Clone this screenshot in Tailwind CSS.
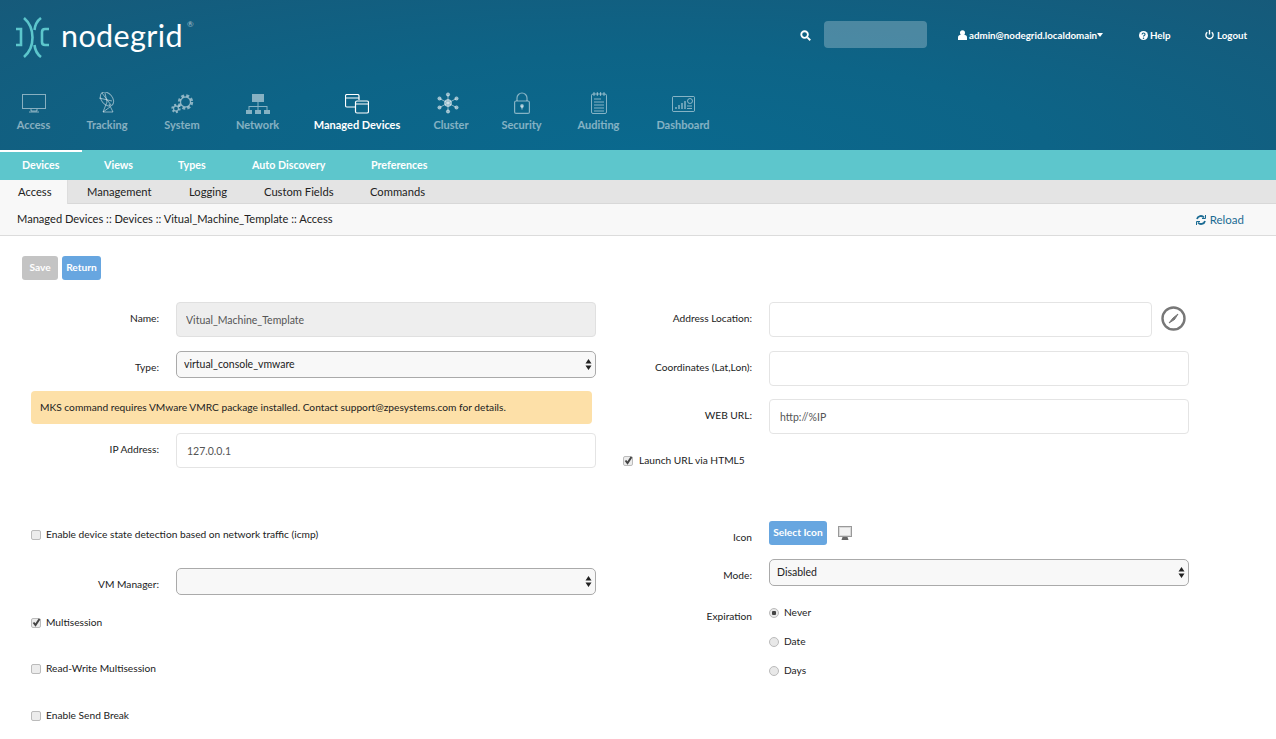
<!DOCTYPE html>
<html lang="en">
<head>
  <meta charset="UTF-8" />
  <title>Nodegrid</title>
  <script src="https://cdn.jsdelivr.net/npm/@tailwindcss/browser@4"></script>
</head>
<body class="bg-white text-[#222] font-['Lato',sans-serif] text-[10.2px] w-[1276px] h-[739px] overflow-hidden">

  <!-- header -->
  <header class="h-[150px] pt-[17px] bg-[radial-gradient(ellipse_at_50%_100%,#0a698e_0%,#0d6487_45%,#165a7a_100%)]">
    <div class="flex items-start h-[72px]">
      <div class="flex items-start pl-[15px] w-[780px]">
        <svg class="w-[35px] h-[41px]" viewBox="0 0 35 41" fill="none" stroke="#5cc6cc" stroke-width="2.6">
          <path d="M1 12h5v16H1" />
          <path d="M9 1c7 6 8.500 12 8.500 19.500S16 34 9 40" />
          <path d="M26 1c-4 3-6 7-6.500 12M19.500 28c.5 5 2.500 9 6.500 12" />
          <path d="M34 12h-4c-2 0-3 1-3 3v10c0 2 1 3 3 3h4" />
        </svg>
        <span class="text-white text-[30.5px] leading-[37px] ml-[11px] tracking-[.4px]">nodegrid</span>
        <span class="text-white/60 text-[8px] leading-[8px] ml-[4px] mt-[3px]">®</span>
      </div>
      <div class="flex items-center text-white font-bold text-[9.75px] h-[30px] mt-[3px]">
        <svg class="w-[11px] h-[11px] ml-[20px]" viewBox="0 0 12 12" fill="none" stroke="white" stroke-width="2"><circle cx="5" cy="5" r="3.600"/><path d="M8 8l3.200 3.200"/></svg>
        <div class="w-[103px] h-[27px] -mt-[2px] rounded-[4px] bg-white/25 ml-[13px]"></div>
        <svg class="w-[9px] h-[10px] ml-[31px]" viewBox="0 0 10 11" fill="white"><circle cx="5" cy="3" r="2.800"/><path d="M0 11V8c0-2 2-3 5-3s5 1 5 3v3z"/></svg>
        <span class="ml-[2px] w-[128px] whitespace-nowrap">admin@nodegrid.localdomain</span>
        <span class="w-0 h-0 border-x-[3.500px] border-x-transparent border-t-[4px] border-t-white"></span>
        <svg class="w-[9px] h-[9px] ml-[36px]" viewBox="0 0 10 10"><circle cx="5" cy="5" r="5" fill="white"/><path d="M3.400 3.800c0-2 3.400-2 3.300 0 0 1.300-1.700 1.200-1.700 2.400" fill="none" stroke="#0f6284" stroke-width="1.200"/><circle cx="5" cy="8" r=".8" fill="#0f6284"/></svg>
        <span class="ml-[2px] w-[28px]">Help</span>
        <svg class="w-[9px] h-[10px] ml-[27px]" viewBox="0 0 10 11" fill="none" stroke="white" stroke-width="1.500"><path d="M5 0v5M2.500 2.500a4 4 0 1 0 5 0"/></svg>
        <span class="ml-[3px]">Logout</span>
      </div>
    </div>

    <nav class="flex pl-[17px] pt-[5px] text-[11px] font-bold text-white/50">
      <a class="w-[33px] flex flex-col items-center">
        <svg class="w-[24px] h-[20px]" viewBox="0 0 24 20" fill="none" stroke="currentColor"><rect x=".5" y=".5" width="23" height="14"/><path d="M9 15v2h6v-2M7 18h10" /></svg>
        <span class="mt-[3px] leading-[16px] whitespace-nowrap">Access</span>
      </a>
      <a class="ml-[36px] w-[42px] flex flex-col items-center">
        <svg class="w-[20px] h-[22px] -mt-[2px]" viewBox="0 0 20 22" fill="none" stroke="currentColor"><ellipse cx="10" cy="7" rx="8" ry="5.500" transform="rotate(50 10 7)"/><path d="M5 1l9 12M2 6l13 3M8 1l2 9M10 10l-4 10h10l-4-8M6 20l7-5"/></svg>
        <span class="mt-[3px] leading-[16px] whitespace-nowrap">Tracking</span>
      </a>
      <a class="ml-[36px] w-[36px] flex flex-col items-center">
        <svg class="w-[23px] h-[20px]" viewBox="0 0 23 20" fill="none" stroke="currentColor" stroke-width="1.300"><circle cx="14.500" cy="8" r="5"/><circle cx="14.500" cy="8" r="6.500" stroke-width="2.400" stroke-dasharray="3 2.100"/><circle cx="5" cy="14.500" r="2.500"/><circle cx="5" cy="14.500" r="3.800" stroke-width="1.800" stroke-dasharray="2 1.900"/></svg>
        <span class="mt-[3px] leading-[16px] whitespace-nowrap">System</span>
      </a>
      <a class="ml-[36px] w-[43px] flex flex-col items-center">
        <svg class="w-[24px] h-[20px]" viewBox="0 0 24 20" fill="currentColor"><rect x="6" y="0" width="12" height="8"/><rect x="0" y="16" width="6" height="4"/><rect x="9" y="16" width="6" height="4"/><rect x="18" y="16" width="6" height="4"/><path d="M11.500 8h1v4h9v4h-1v-3h-8v3h-1v-3h-8v3h-1v-4h9z"/></svg>
        <span class="mt-[3px] leading-[16px] whitespace-nowrap">Network</span>
      </a>
      <a class="ml-[35px] w-[86px] flex flex-col items-center text-white">
        <svg class="w-[24px] h-[20px]" viewBox="0 0 24 20" fill="none" stroke="currentColor" stroke-width="1.200"><path d="M10 13H2c-1 0-1.500-.5-1.500-1.500V2C.5 1 1 .5 2 .5h10.500c1 0 1.500.5 1.500 1.500v4"/><rect x="10.500" y="7" width="13" height="12" rx="1.500"/><path d="M10.500 10h13M.5 4h13.500"/></svg>
        <span class="mt-[3px] leading-[16px] whitespace-nowrap">Managed Devices</span>
      </a>
      <a class="ml-[32px] w-[38px] flex flex-col items-center">
        <svg class="w-[22px] h-[22px] -mt-[2px] mr-[6px]" viewBox="0 0 22 21" fill="currentColor" stroke="currentColor"><circle cx="11" cy="10.500" r="3.500"/><circle cx="11" cy="2" r="1.600"/><circle cx="11" cy="19" r="1.600"/><circle cx="2.500" cy="6" r="1.600"/><circle cx="19.500" cy="6" r="1.600"/><circle cx="2.500" cy="15" r="1.600"/><circle cx="19.500" cy="15" r="1.600"/><path d="M11 2v17M2.500 6l17 9M19.500 6l-17 9"/></svg>
        <span class="mt-[3px] leading-[16px] whitespace-nowrap">Cluster</span>
      </a>
      <a class="ml-[31px] w-[41px] flex flex-col items-center">
        <svg class="w-[16px] h-[22px] -mt-[2px]" viewBox="0 0 16 22" fill="none" stroke="currentColor" stroke-width="1.200"><rect x=".6" y="9" width="14.800" height="12.400" rx="1.500"/><path d="M3 9V6a5 5 0 0 1 10 0v3"/><circle cx="8" cy="14" r="1.300" fill="currentColor"/><path d="M8 14v3.500"/></svg>
        <span class="mt-[3px] leading-[16px] whitespace-nowrap">Security</span>
      </a>
      <a class="ml-[35px] w-[43px] flex flex-col items-center">
        <svg class="w-[16px] h-[22px] -mt-[2px]" viewBox="0 0 16 22" fill="none" stroke="currentColor"><rect x=".5" y="2" width="15" height="19.500" rx="1.500"/><path d="M3 0v4M6.300 0v4M9.600 0v4M13 0v4M3 7h7M3 10h10M3 13h10M3 16h10M3 19h10"/></svg>
        <span class="mt-[3px] leading-[16px] whitespace-nowrap">Auditing</span>
      </a>
      <a class="ml-[36px] w-[54px] flex flex-col items-center">
        <svg class="w-[23px] h-[16px] mt-[2px] mb-[2px]" viewBox="0 0 23 16" fill="none" stroke="currentColor"><rect x=".5" y=".5" width="22" height="15" rx="1"/><path d="M4 13v-2M7 13V9M10 13V7M13 13V5" stroke-width="1.500"/><circle cx="18" cy="5" r="2.500"/><path d="M15 10h5M15 12.500h5"/></svg>
        <span class="mt-[3px] leading-[16px] whitespace-nowrap">Dashboard</span>
      </a>
    </nav>
  </header>

  <!-- teal tabs -->
  <div class="flex h-[30px] pt-[2px] gap-[45px] pl-[22px] bg-[#5dc6cc] text-white font-bold text-[10.7px] leading-[26px] relative">
    <span class="absolute left-0 top-0 w-[82px] h-[2px] bg-white"></span>
    <a class="w-[37px] whitespace-nowrap">Devices</a>
    <a class="w-[29px] whitespace-nowrap">Views</a>
    <a class="w-[29px] whitespace-nowrap">Types</a>
    <a class="w-[74px] whitespace-nowrap">Auto Discovery</a>
    <a class="w-[58px] whitespace-nowrap">Preferences</a>
  </div>

  <!-- sub tabs -->
  <div class="flex h-[24px] bg-[#e4e4e4] border-b border-[#d8d8d8] leading-[24px] text-[11.2px]">
    <a class="w-[68px] h-[24px] pl-[18px] bg-[#f8f8f8] border-r border-[#ddd]">Access</a>
    <div class="flex gap-[36px] pl-[19px]">
      <a class="w-[66px] whitespace-nowrap">Management</a>
      <a class="w-[39px] whitespace-nowrap">Logging</a>
      <a class="w-[70px] whitespace-nowrap">Custom Fields</a>
      <a class="w-[56px] whitespace-nowrap">Commands</a>
    </div>
  </div>

  <!-- breadcrumb -->
  <div class="flex items-center justify-between h-[32px] pl-[17px] pr-[32px] bg-[#f8f8f8] border-b border-[#dcdcdc] text-[11.1px]">
    <span>Managed Devices :: Devices :: Vitual_Machine_Template :: Access</span>
    <span class="flex items-center gap-[4px] text-[#1b6b93] text-[11.5px]">
      <svg class="w-[10px] h-[10px]" viewBox="0 0 10 10" fill="none" stroke="#1b6b93" stroke-width="1.800"><path d="M1 4a4 4 0 0 1 7-1.500M9 6a4 4 0 0 1-7 1.500"/><path d="M9.500 0v3.500H6M.5 10V6.500H4" stroke-width="1"/></svg>
      Reload
    </span>
  </div>

  <!-- buttons -->
  <div class="flex gap-[4px] pl-[22px] pt-[20px]">
    <button class="w-[36px] h-[24px] rounded-[3px] bg-[#c4c4c4] text-white font-bold">Save</button>
    <button class="w-[39px] h-[24px] rounded-[3px] bg-[#67a6e0] text-white font-bold">Return</button>
  </div>

  <!-- form -->
  <div class="flex pt-[22px]">
    <div class="w-[610px] shrink-0">
      <div class="flex h-[35px] mb-[14px]">
        <label class="w-[159px] text-right pt-[9px]">Name:</label>
        <input readonly value="Vitual_Machine_Template" class="ml-[17px] w-[420px] h-[35px] px-[9px] rounded-[4px] border border-[#e0e0e0] bg-[#eeeeee] text-[#555] text-[10.5px]" />
      </div>
      <div class="flex h-[27px] mb-[13px]">
        <label class="w-[159px] text-right pt-[9px]">Type:</label>
        <div class="relative ml-[17px] w-[420px] h-[27px]">
          <select class="appearance-none w-full h-full pl-[7px] rounded-[5px] border border-[#aaa] bg-[#f8f8f8] text-[10.5px]"><option>virtual_console_vmware</option></select>
          <svg class="absolute right-[4px] top-[8px] w-[7px] h-[11px]" viewBox="0 0 7 11" fill="#222"><path d="M3.500 0l3 4.500H.5zM3.500 11l3-4.500H.5z"/></svg>
        </div>
      </div>
      <div class="ml-[31px] w-[561px] h-[33px] rounded-[4px] bg-[#fde0a8] pl-[9px] leading-[32px] mb-[9px]">MKS command requires VMware VMRC package installed. Contact support@zpesystems.com for details.</div>
      <div class="flex h-[35px]">
        <label class="w-[159px] text-right pt-[9px]">IP Address:</label>
        <input readonly value="127.0.0.1" class="ml-[17px] w-[420px] h-[35px] px-[10px] rounded-[4px] border border-[#e4e4e4] text-[#555] text-[10.5px]" />
      </div>
      <label class="flex items-center gap-[5px] ml-[31px] mt-[60px] h-[14px]">
        <input type="checkbox" class="appearance-none w-[10px] h-[10px] rounded-[2px] border border-[#bbb] bg-[#ececec]" /> Enable device state detection based on network traffic (icmp)
      </label>
      <div class="flex h-[27px] mt-[26px]">
        <label class="w-[159px] text-right pt-[9px]">VM Manager:</label>
        <div class="relative ml-[17px] w-[420px] h-[27px]">
          <select class="appearance-none w-full h-full pl-[7px] rounded-[5px] border border-[#aaa] bg-[#f8f8f8]"><option></option></select>
          <svg class="absolute right-[4px] top-[8px] w-[7px] h-[11px]" viewBox="0 0 7 11" fill="#222"><path d="M3.500 0l3 4.500H.5zM3.500 11l3-4.500H.5z"/></svg>
        </div>
      </div>
      <label class="flex items-center gap-[5px] ml-[31px] mt-[21px] h-[14px] relative">
        <input type="checkbox" checked class="appearance-none w-[10px] h-[10px] rounded-[2px] border border-[#bbb] bg-[#ececec]" /> Multisession
        <svg class="absolute left-[1px] top-[2px] w-[9px] h-[9px]" viewBox="0 0 9 9" fill="none" stroke="#444" stroke-width="2"><path d="M1.500 4.500l2 2.500 4-6"/></svg>
      </label>
      <label class="flex items-center gap-[5px] ml-[31px] mt-[32px] h-[14px]">
        <input type="checkbox" class="appearance-none w-[10px] h-[10px] rounded-[2px] border border-[#bbb] bg-[#ececec]" /> Read-Write Multisession
      </label>
      <label class="flex items-center gap-[5px] ml-[31px] mt-[33px] h-[14px]">
        <input type="checkbox" class="appearance-none w-[10px] h-[10px] rounded-[2px] border border-[#bbb] bg-[#ececec]" /> Enable Send Break
      </label>
    </div>

    <div class="flex-1">
      <div class="flex h-[35px] mb-[14px]">
        <label class="w-[142px] text-right pt-[9px]">Address Location:</label>
        <input class="ml-[17px] w-[383px] h-[35px] rounded-[4px] border border-[#e4e4e4]" />
        <svg class="w-[25px] h-[25px] ml-[9px] mt-[4px]" viewBox="0 0 25 25" fill="none" stroke="#777"><circle cx="12.500" cy="12.500" r="11" stroke-width="2.400"/><path d="M17 8l-5 4 1.500 1.500zM8 17l4-5 1.500 1.500z" fill="#777"/></svg>
      </div>
      <div class="flex h-[35px] mb-[13px]">
        <label class="w-[142px] text-right pt-[9px]">Coordinates (Lat,Lon):</label>
        <input class="ml-[17px] w-[420px] h-[35px] rounded-[4px] border border-[#e4e4e4]" />
      </div>
      <div class="flex h-[35px]">
        <label class="w-[142px] text-right pt-[9px]">WEB URL:</label>
        <input readonly value="http://%IP" class="ml-[17px] w-[420px] h-[35px] px-[10px] rounded-[4px] border border-[#e4e4e4] text-[#555] text-[10.5px]" />
      </div>
      <label class="flex items-center gap-[6px] ml-[13px] mt-[20px] h-[14px] relative">
        <input type="checkbox" checked class="appearance-none w-[10px] h-[10px] rounded-[2px] border border-[#bbb] bg-[#ececec]" /> Launch URL via HTML5
        <svg class="absolute left-[1px] top-[2px] w-[9px] h-[9px]" viewBox="0 0 9 9" fill="none" stroke="#444" stroke-width="2"><path d="M1.500 4.500l2 2.500 4-6"/></svg>
      </label>
      <div class="flex h-[24px] mt-[53px]">
        <label class="w-[142px] text-right pt-[9px]">Icon</label>
        <button class="ml-[17px] w-[58px] h-[24px] rounded-[3px] bg-[#67a6e0] text-white font-bold">Select Icon</button>
        <svg class="w-[14px] h-[14px] ml-[11px] mt-[5px]" viewBox="0 0 14 14"><rect x=".5" y=".5" width="13" height="10" fill="#d8d8d8" stroke="#999"/><rect x="2" y="2" width="10" height="7" fill="#f2f2f2"/><path d="M3.500 14l1-3h5l1 3z" fill="#666"/></svg>
      </div>
      <div class="flex h-[27px] mt-[14px]">
        <label class="w-[142px] text-right pt-[9px]">Mode:</label>
        <div class="relative ml-[17px] w-[420px] h-[27px]">
          <select class="appearance-none w-full h-full pl-[7px] rounded-[5px] border border-[#aaa] bg-[#f8f8f8] text-[10.5px]"><option>Disabled</option></select>
          <svg class="absolute right-[4px] top-[8px] w-[7px] h-[11px]" viewBox="0 0 7 11" fill="#222"><path d="M3.500 0l3 4.500H.5zM3.500 11l3-4.500H.5z"/></svg>
        </div>
      </div>
      <div class="flex mt-[20px]">
        <label class="w-[142px] text-right pt-[3px]">Expiration</label>
        <div class="ml-[17px] flex flex-col gap-[15px]">
          <label class="flex items-center gap-[5px] h-[14px]"><input type="radio" name="exp" checked class="appearance-none w-[10px] h-[10px] rounded-full border border-[#bbb] bg-[#e8e8e8] checked:bg-[radial-gradient(circle,#444_0,#444_2px,#e8e8e8_2.500px)]" /> Never</label>
          <label class="flex items-center gap-[5px] h-[14px]"><input type="radio" name="exp" class="appearance-none w-[10px] h-[10px] rounded-full border border-[#bbb] bg-[#e8e8e8]" /> Date</label>
          <label class="flex items-center gap-[5px] h-[14px]"><input type="radio" name="exp" class="appearance-none w-[10px] h-[10px] rounded-full border border-[#bbb] bg-[#e8e8e8]" /> Days</label>
        </div>
      </div>
    </div>
  </div>
</body>
</html>
